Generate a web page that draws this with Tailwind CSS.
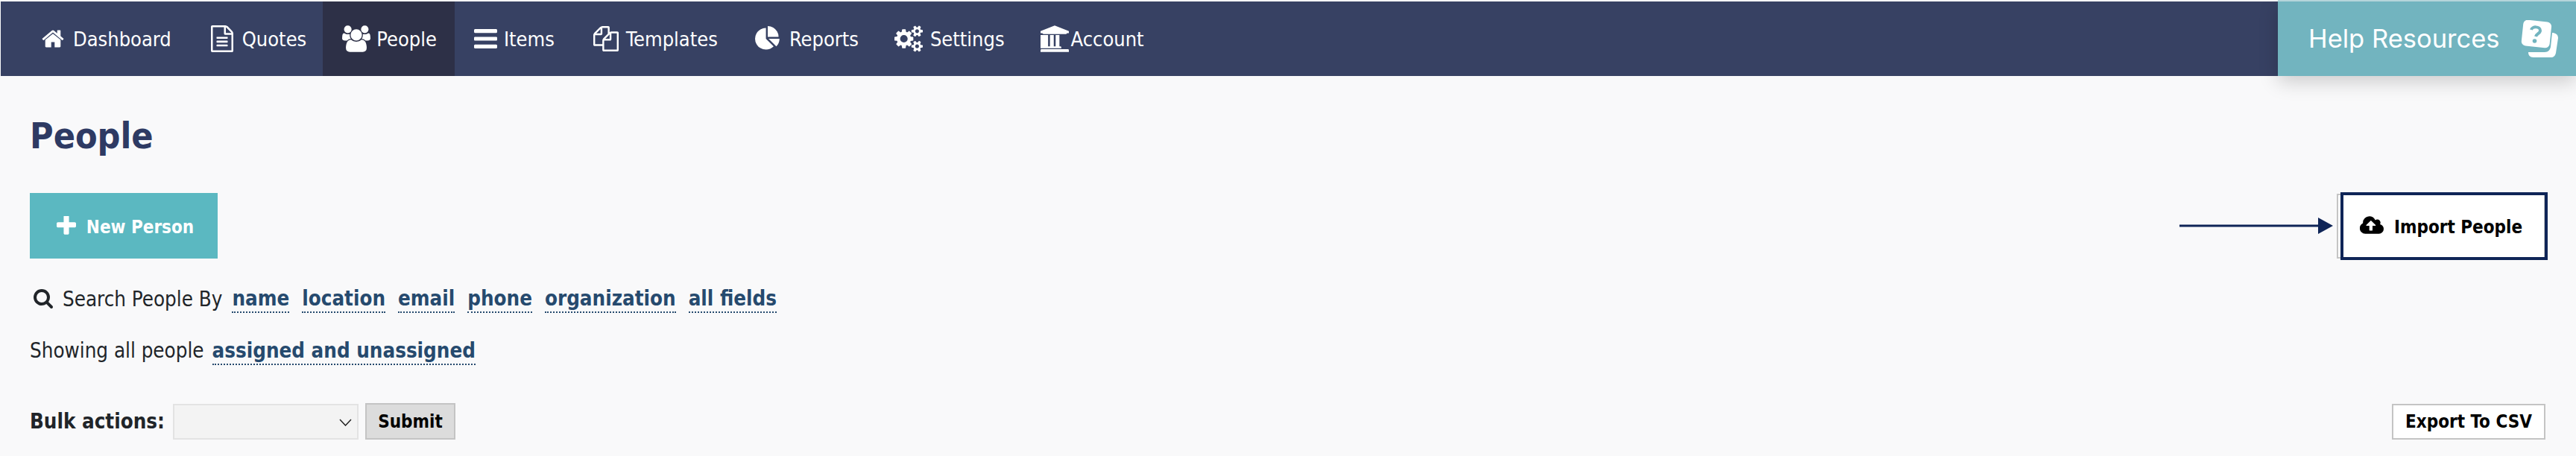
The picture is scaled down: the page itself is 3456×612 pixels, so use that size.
<!DOCTYPE html>
<html lang="en">
<head>
    <meta charset="UTF-8">
    <title>People</title>
    <script src="https://cdn.jsdelivr.net/npm/@tailwindcss/browser@4"></script>
</head>
<body class="bg-[#f9f9fa] h-[612px] w-[3456px] overflow-hidden font-['DejaVu_Sans_Condensed','DejaVu_Sans',sans-serif] text-[27.5px] text-[#212529]">
    <!-- Top nav -->
    <nav class="mt-[2px] ml-px h-[100px] bg-[#374163] flex justify-between text-[27px] text-white">
        <div class="flex pl-[30px] gap-[2px]">
            <a href="#" class="flex items-center px-6 gap-[11px]">
                <svg class="w-[32px] h-[32px]" viewBox="0 0 1792 1792" fill="currentColor"><path d="M1472 992v480q0 26-19 45t-45 19h-384v-384h-256v384h-384q-26 0-45-19t-19-45v-480q0-1 .5-3t.5-3l575-474 575 474q1 2 1 6zm223-69l-62 74q-8 9-21 11h-3q-13 0-21-7l-692-577-692 577q-12 8-24 7-13-2-21-11l-62-74q-8-10-7-23.5t11-21.5l719-599q32-26 76-26t76 26l244 204v-195q0-14 9-23t23-9h192q14 0 23 9t9 23v408l219 182q10 8 11 21.5t-7 23.5z"/></svg>
                <span class="pt-[3px]">Dashboard</span>
            </a>
            <a href="#" class="flex items-center px-6 gap-3 ml-[3px]">
                <svg class="w-[30px] h-[36px]" preserveAspectRatio="none" viewBox="128 0 1536 1792" fill="currentColor"><path d="M1596 380q28 28 48 76t20 88v1152q0 40-28 68t-68 28h-1344q-40 0-68-28t-28-68v-1600q0-40 28-68t68-28h896q40 0 88 20t76 48zm-444-244v376h376q-10-29-22-41l-313-313q-12-12-41-22zm384 1528v-1024h-416q-40 0-68-28t-28-68v-416h-768v1536h1280zm-1024-864q0-14 9-23t23-9h704q14 0 23 9t9 23v64q0 14-9 23t-23 9h-704q-14 0-23-9t-9-23v-64zm736 224q14 0 23 9t9 23v64q0 14-9 23t-23 9h-704q-14 0-23-9t-9-23v-64q0-14 9-23t23-9h704zm0 256q14 0 23 9t9 23v64q0 14-9 23t-23 9h-704q-14 0-23-9t-9-23v-64q0-14 9-23t23-9h704z"/></svg>
                <span class="pt-[3px]">Quotes</span>
            </a>
            <a href="#" class="flex items-center pl-[26px] pr-6 gap-2 bg-[#2d3047] -ml-[4px]">
                <svg class="w-[38px] h-[36px]" viewBox="0 0 1920 1792" fill="currentColor"><path d="M593 896q-162 5-265 128h-134q-82 0-138-40.500t-56-118.500q0-353 124-353 6 0 43.500 21t97.500 42.500 119 21.500q67 0 133-23-5 37-5 66 0 139 81 256zm1071 637q0 120-73 189.500t-194 69.500h-874q-121 0-194-69.500t-73-189.500q0-53 3.500-103.500t14-109 26.500-108.500 43-97.500 62-81 85.500-53.500 111.500-20q10 0 43 21.500t73 48 107 48 135 21.500 135-21.500 107-48 73-48 43-21.500q61 0 111.500 20t85.500 53.500 62 81 43 97.500 26.500 108.500 14 109 3.500 103.500zm-1024-1277q0 106-75 181t-181 75-181-75-75-181 75-181 181-75 181 75 75 181zm704 384q0 159-112.500 271.500t-271.500 112.500-271.500-112.500-112.500-271.500 112.500-271.500 271.500-112.500 271.500 112.500 112.500 271.500zm576 225q0 78-56 118.500t-138 40.500h-134q-103-123-265-128 81-117 81-256 0-29-5-66 66 23 133 23 59 0 119-21.500t97.500-42.500 43.500-21q124 0 124 353zm-128-609q0 106-75 181t-181 75-181-75-75-181 75-181 181-75 181 75 75 181z"/></svg>
                <span class="pt-[3px]">People</span>
            </a>
            <a href="#" class="flex items-center px-6 gap-[9px]">
                <svg class="w-[31px] h-[26px]" preserveAspectRatio="none" viewBox="128 256 1536 1280" fill="currentColor"><path d="M1664 1344v128q0 26-19 45t-45 19h-1408q-26 0-45-19t-19-45v-128q0-26 19-45t45-19h1408q26 0 45 19t19 45zm0-512v128q0 26-19 45t-45 19h-1408q-26 0-45-19t-19-45v-128q0-26 19-45t45-19h1408q26 0 45 19t19 45zm0-512v128q0 26-19 45t-45 19h-1408q-26 0-45-19t-19-45v-128q0-26 19-45t45-19h1408q26 0 45 19t19 45z"/></svg>
                <span class="pt-[3px]">Items</span>
            </a>
            <a href="#" class="flex items-center px-6 gap-[10px] ml-[2px]">
                <svg class="w-[34px] h-[36px]" viewBox="0 0 1792 1792" fill="currentColor"><path d="M1696 384q40 0 68 28t28 68v1216q0 40-28 68t-68 28h-960q-40 0-68-28t-28-68v-288h-544q-40 0-68-28t-28-68v-672q0-40 20-88t48-76l408-408q28-28 76-48t88-20h416q40 0 68 28t28 68v328q68-40 128-40h416zm-544 213l-299 299h299v-299zm-640-384l-299 299h299v-299zm196 647l316-316v-416h-384v416q0 40-28 68t-68 28h-416v640h512v-256q0-40 20-88t48-76zm956 804v-1152h-384v416q0 40-28 68t-68 28h-416v640h896z"/></svg>
                <span class="pt-[3px]">Templates</span>
            </a>
            <a href="#" class="flex items-center px-6 gap-3">
                <svg class="w-[34px] h-[34px]" viewBox="0 0 1792 1792" fill="currentColor"><path d="M768 890l546 546q-106 108-247.500 168t-298.500 60q-209 0-385.500-103t-279.500-279.500-103-385.500 103-385.500 279.500-279.500 385.500-103v762zm187 6h773q0 157-60 298.500t-168 247.500zm709-128h-768v-768q209 0 385.500 103t279.500 279.500 103 385.500z"/></svg>
                <span class="pt-[3px]">Reports</span>
            </a>
            <a href="#" class="flex items-center px-6 gap-[10px] -ml-[2px]">
                <svg class="w-[38px] h-[36px]" viewBox="0 0 1920 1792" fill="currentColor"><path d="M896 896q0-106-75-181t-181-75-181 75-75 181 75 181 181 75 181-75 75-181zm768 512q0-52-38-90t-90-38-90 38-38 90q0 53 37.500 90.500t90.500 37.500 90.500-37.500 37.500-90.500zm0-1024q0-52-38-90t-90-38-90 38-38 90q0 53 37.500 90.500t90.500 37.500 90.500-37.500 37.500-90.500zm-384 421v185q0 10-7 19.500t-16 10.500l-155 24q-11 35-32 76 34 48 90 115 7 11 7 20 0 12-7 19-23 30-82.500 89.500t-78.500 59.500q-11 0-21-7l-115-90q-37 19-77 31-11 108-23 155-7 24-30 24h-186q-11 0-20-7.500t-10-17.500l-23-153q-34-10-75-31l-118 89q-7 7-20 7-11 0-21-8-144-133-144-160 0-9 7-19 10-14 41-53t47-61q-23-44-35-82l-152-24q-10-1-17-9.500t-7-19.500v-185q0-10 7-19.500t16-10.500l155-24q11-35 32-76-34-48-90-115-7-11-7-20 0-12 7-20 22-30 82-89t79-59q11 0 21 7l115 90q34-18 77-32 11-108 23-154 7-24 30-24h186q11 0 20 7.500t10 17.500l23 153q34 10 75 31l118-89q8-7 20-7 11 0 21 8 144 133 144 160 0 8-7 19-12 16-42 54t-45 60q23 48 34 82l152 23q10 2 17 10.500t7 19.500zm640 533v140q0 16-149 31-12 27-30 52 51 113 51 138 0 4-4 7-122 71-124 71-8 0-46-47t-52-68q-20 2-30 2t-30-2q-14 21-52 68t-46 47q-2 0-124-71-4-3-4-7 0-25 51-138-18-25-30-52-149-15-149-31v-140q0-16 149-31 13-29 30-52-51-113-51-138 0-4 4-7 4-2 35-20t59-34 30-16q8 0 46 46.500t52 67.500q20-2 30-2t30 2q51-71 92-112l6-2q4 0 124 70 4 3 4 7 0 25-51 138 17 23 30 52 149 15 149 31zm0-1024v140q0 16-149 31-12 27-30 52 51 113 51 138 0 4-4 7-122 71-124 71-8 0-46-47t-52-68q-20 2-30 2t-30-2q-14 21-52 68t-46 47q-2 0-124-71-4-3-4-7 0-25 51-138-18-25-30-52-149-15-149-31v-140q0-16 149-31 13-29 30-52-51-113-51-138 0-4 4-7 4-2 35-20t59-34 30-16q8 0 46 46.500t52 67.500q20-2 30-2t30 2q51-71 92-112l6-2q4 0 124 70 4 3 4 7 0 25-51 138 17 23 30 52 149 15 149 31z"/></svg>
                <span class="pt-[3px]">Settings</span>
            </a>
            <a href="#" class="flex items-center px-6 gap-[3px] -ml-[2px]">
                <svg class="w-[38px] h-[36px]" viewBox="0 0 1920 1792" fill="currentColor"><path d="M960 0l960 384v128h-128q0 26-20.500 45t-48.500 19h-1526q-28 0-48.500-19t-20.500-45h-128v-128zm-704 640h256v768h128v-768h256v768h128v-768h256v768h59q28 0 48.500 19t20.500 45v64h-1664v-64q0-26 20.500-45t48.500-19h59v-768zm1595 960q28 0 48.500 19t20.500 45v128h-1920v-128q0-26 20.500-45t48.500-19h1782z"/></svg>
                <span class="pt-[3px]">Account</span>
            </a>
        </div>

        <!-- Help panel -->
        <a href="#" class="-mt-[2px] h-[102px] w-[400px] border-t-2 border-[#b5d5da] bg-[#72b4bf] shadow-[0_8px_24px_rgba(0,0,0,0.18)] flex items-center pl-[41px] gap-[28px] font-['Inter',sans-serif] text-[34.5px] text-white">
            <span>Help Resources</span>
            <svg class="w-[50px] h-[50px]" viewBox="0 0 50 50">
                <path d="M42 17c4 0 8 2 8 7l-3 20c-1 4-3 6-7 6H17c-5 0-7-3-7-7h22c5 0 7-3 8-7z" fill="#fff"/>
                <rect x="2" y="1" width="38" height="35" rx="6" transform="rotate(6 21 18)" fill="#fff"/>
                <path d="M14 13c1-5 12-5 12 1 0 4-5 4-6 8" fill="none" stroke="#72b4bf" stroke-width="4"/>
                <circle cx="18.500" cy="28" r="2.800" fill="#72b4bf"/>
            </svg>
        </a>
    </nav>

    <main class="pl-10 pr-[41px]">
        <h1 class="h-[157px] pt-[50px] text-[48px] leading-[60px] font-bold text-[#2e3a63]">People</h1>

        <div class="flex justify-between items-center h-[88px]">
            <a href="#" class="w-[252px] h-[88px] bg-[#5bb8c1] text-white text-[24px] font-bold flex items-center justify-center gap-[14px]">
                <svg class="w-[26px] h-[26px] ml-[4px]" preserveAspectRatio="none" viewBox="192 192 1408 1408" fill="currentColor"><path d="M1600 736v192q0 40-28 68t-68 28h-416v416q0 40-28 68t-68 28h-192q-40 0-68-28t-28-68v-416h-416q-40 0-68-28t-28-68v-192q0-40 28-68t68-28h416v-416q0-40 28-68t68-28h192q40 0 68 28t28 68v416h416q40 0 68 28t28 68z"/></svg>
                <span class="pt-[3px]">New Person</span>
            </a>
            <div class="flex items-center gap-[5px]">
                <svg class="w-[206px] h-[22px]" viewBox="0 0 206 22"><path d="M0 9.500h186v3H0zM186 0l20 11-20 11z" fill="#0f2557"/></svg>
                <div class="relative">
                    <a href="#" class="w-[280px] h-[87px] bg-white border-2 border-[#c4c4c4] text-black text-[24px] font-bold flex items-center justify-center gap-3">
                        <svg class="w-[34px] h-[30px]" viewBox="0 0 1920 1792" fill="currentColor"><path d="M1216 864q0-14-9-23l-352-352q-9-9-23-9t-23 9l-351 351q-10 12-10 24 0 14 9 23t23 9h224v352q0 13 9.500 22.500t22.500 9.500h192q13 0 22.500-9.500t9.500-22.500v-352h224q13 0 22.500-9.500t9.500-22.500zm640 288q0 159-112.500 271.500t-271.500 112.500h-1088q-185 0-316.500-131.500t-131.500-316.500q0-130 70-240t188-165q-2-30-2-43 0-212 150-362t362-150q156 0 285.500 87t188.500 231q71-62 166-62 106 0 181 75t75 181q0 76-41 138 130 31 213.500 135.500t83.500 238.500z"/></svg>
                        <span class="pt-[3px]">Import People</span>
                    </a>
                    <div class="absolute top-[-2px] bottom-[-2px] left-[5px] right-[-3px] border-4 border-[#0f2557]"></div>
                </div>
            </div>
        </div>

        <div class="flex items-center h-[71px] mt-[17px]">
            <svg class="w-[28px] h-[28px] ml-[4px] mr-[12px] text-[#212529]" viewBox="0 0 1792 1792" fill="currentColor"><path d="M1216 832q0-185-131.500-316.500t-316.500-131.500-316.500 131.500-131.500 316.500 131.500 316.500 316.500 131.500 316.500-131.500 131.500-316.500zm512 832q0 52-38 90t-90 38q-54 0-90-38l-343-342q-179 124-399 124-143 0-273.500-55.500t-225-150-150-225-55.500-273.500 55.500-273.500 150-225 225-150 273.500-55.500 273.500 55.500 225 150 150 225 55.500 273.500q0 220-124 399l343 343q37 37 37 90z"/></svg>
            <span class="mr-[13px] pt-[4px]">Search People By</span>
            <div class="flex gap-[17px] font-bold text-[#264a6e] pt-[2px]">
                <a href="#" class="border-b-2 border-dotted border-[#264a6e] leading-[36px]">name</a>
                <a href="#" class="border-b-2 border-dotted border-[#264a6e] leading-[36px]">location</a>
                <a href="#" class="border-b-2 border-dotted border-[#264a6e] leading-[36px]">email</a>
                <a href="#" class="border-b-2 border-dotted border-[#264a6e] leading-[36px]">phone</a>
                <a href="#" class="border-b-2 border-dotted border-[#264a6e] leading-[36px]">organization</a>
                <a href="#" class="border-b-2 border-dotted border-[#264a6e] leading-[36px]">all fields</a>
            </div>
        </div>

        <div class="flex items-center h-[71px]">
            <span class="mr-[11px]">Showing all people</span>
            <a href="#" class="font-bold text-[#264a6e] border-b-2 border-dotted border-[#264a6e] leading-[36px]">assigned and unassigned</a>
        </div>

        <div class="flex items-center justify-between h-[49px] mt-[35px]">
            <form class="flex items-center">
                <label class="font-bold w-[192px]">Bulk actions:</label>
                <div class="relative">
                    <select class="appearance-none block w-[249px] h-[48px] bg-[#f3f3f3] border-2 border-[#e3e3e3] text-black"></select>
                    <svg class="absolute right-[9px] top-[20px] w-[17px] h-[10px] pointer-events-none" viewBox="0 0 17 10"><path d="M1 1l7.500 8L16 1" fill="none" stroke="#222" stroke-width="1.500"/></svg>
                </div>
                <button type="button" class="ml-[9px] w-[121px] h-[49px] bg-[#dcdcdc] border-2 border-[#c4c4c4] text-black text-[24px] font-bold">Submit</button>
            </form>
            <a href="#" class="w-[206px] h-[48px] bg-white border-2 border-[#c4c4c4] text-black text-[24px] font-bold flex items-center justify-center">Export To CSV</a>
        </div>
    </main>
</body>
</html>
